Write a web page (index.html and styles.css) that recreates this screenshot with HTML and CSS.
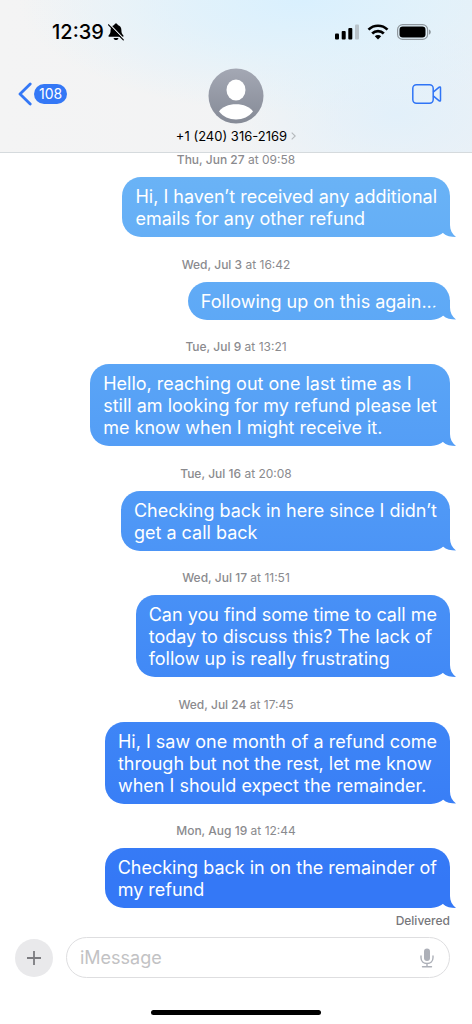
FILE: index.html
```html
<!DOCTYPE html>
<html lang="en">
<head>
<meta charset="utf-8">
<meta name="viewport" content="width=device-width, initial-scale=1">
<title>Messages</title>
<link rel="stylesheet" href="styles.css">
</head>
<body>
<div class="phone">
  <header class="header">
    <div class="status">
      <div class="status-time">
        <span>12:39</span>
        <svg width="16" height="18" viewBox="0 0 16 18" aria-hidden="true">
          <path d="M8 .6c.9 0 1.600.6 1.700 1.400 2.300.7 3.700 2.500 3.700 5 0 3 .6 4 1.800 5.200.6.6.4 1.600-.7 1.600H1.500c-1.100 0-1.300-1-.7-1.600C2 11 2.600 10 2.600 7c0-2.500 1.400-4.300 3.700-5C6.400 1.200 7.100.6 8 .6zM5.600 14.900h4.800c-.2 1.300-1.100 2.100-2.400 2.100s-2.200-.8-2.400-2.100z" fill="#000"/>
          <path d="M1.500 1.200 15.800 15.900" stroke="#eff3f6" stroke-width="1.200"/>
          <path d="M.6 1.800 15.300 16.900" stroke="#000" stroke-width="1.200" stroke-linecap="round"/>
        </svg>
      </div>
      <div class="status-icons">
        <svg width="24" height="16" viewBox="0 0 24 16" aria-hidden="true">
          <rect x="0" y="9.500" width="4" height="6" rx="1"/>
          <rect x="6.700" y="7" width="4" height="8.500" rx="1"/>
          <rect x="13.300" y="4" width="4" height="11.500" rx="1"/>
          <rect x="20" y=".5" width="4" height="15" rx="1" fill="#b9c3ca"/>
        </svg>
        <svg width="22" height="16" viewBox="0 0 22 16" aria-hidden="true">
          <g fill="none" stroke="#000" stroke-width="2.700">
            <path d="M1.500 5.600a13.600 13.600 0 0 1 19 0"/>
            <path d="M5.200 9.500a8.200 8.200 0 0 1 11.600 0"/>
          </g>
          <path d="M11 15.500 7.800 12.300a4.500 4.500 0 0 1 6.400 0z"/>
        </svg>
        <svg width="34" height="16" viewBox="0 0 34 16" aria-hidden="true">
          <rect x=".6" y=".6" width="30" height="14.800" rx="5" fill="none" stroke="#8f989e" stroke-width="1.200"/>
          <rect x="2.500" y="2.500" width="26" height="11" rx="3.200"/>
          <path d="M32 5.400c1.200.5 1.800 1.400 1.800 2.600s-.6 2.100-1.800 2.600z" fill="#8f989e"/>
        </svg>
      </div>
    </div>
    <nav class="nav">
      <button class="back" type="button" aria-label="Back, 108 unread">
        <svg width="14" height="24" viewBox="0 0 14 24" aria-hidden="true"><path d="M12.200 2 2 12l10.200 10" fill="none" stroke="#3478f6" stroke-width="2.800" stroke-linecap="round" stroke-linejoin="round"/></svg>
        <span class="count">108</span>
      </button>
      <button class="contact" type="button">
        <svg width="56" height="56" viewBox="0 0 56 56" aria-hidden="true">
          <defs>
            <linearGradient id="avatar" x1="0" y1="0" x2="0" y2="1"><stop offset="0" stop-color="#a4a8b4"/><stop offset="1" stop-color="#858a96"/></linearGradient>
          </defs>
          <circle cx="28" cy="28" r="27.500" fill="url(#avatar)"/>
          <ellipse cx="28" cy="22" rx="9.500" ry="10.500" fill="#fff"/>
          <path d="M11 43.500C14 39 20.500 36.300 28 36.300S42 39 45 43.500C40.800 48.700 35 51.500 28 51.500s-12.800-2.800-17-8z" fill="#fff"/>
        </svg>
        <span class="number">+1 (240) 316-2169
          <svg width="5" height="8" viewBox="0 0 5 8" aria-hidden="true"><path d="M.7.6 4.200 4 .7 7.400" fill="none" stroke="#b4b8bb" stroke-width="1.100"/></svg>
        </span>
      </button>
      <button class="video" type="button" aria-label="Video call">
        <svg width="30" height="20" viewBox="0 0 30 20" fill="none" stroke="#2f74f6" stroke-width="1.500" stroke-linejoin="round" aria-hidden="true">
          <rect x=".8" y=".8" width="20.400" height="18.400" rx="3.600"/>
          <path d="M21.200 8.200 27.200 3.200c.7-.5 1.300-.3 1.300.6v12.400c0 .9-.6 1.100-1.300.6l-6-5"/>
        </svg>
      </button>
    </nav>
  </header>

  <main class="chat">
    <ol class="thread">
      <li class="entry"><time class="stamp"><b>Thu, Jun 27</b> at 09:58</time><p class="bubble">Hi, I haven’t received any additional<br>emails for any other refund</p></li>
      <li class="entry"><time class="stamp"><b>Wed, Jul 3</b> at 16:42</time><p class="bubble">Following up on this again...</p></li>
      <li class="entry"><time class="stamp"><b>Tue, Jul 9</b> at 13:21</time><p class="bubble">Hello, reaching out one last time as I<br>still am looking for my refund please let<br>me know when I might receive it.</p></li>
      <li class="entry"><time class="stamp"><b>Tue, Jul 16</b> at 20:08</time><p class="bubble">Checking back in here since I didn’t<br>get a call back</p></li>
      <li class="entry"><time class="stamp"><b>Wed, Jul 17</b> at 11:51</time><p class="bubble">Can you find some time to call me<br>today to discuss this? The lack of<br>follow up is really frustrating</p></li>
      <li class="entry"><time class="stamp"><b>Wed, Jul 24</b> at 17:45</time><p class="bubble">Hi, I saw one month of a refund come<br>through but not the rest, let me know<br>when I should expect the remainder.</p></li>
      <li class="entry"><time class="stamp"><b>Mon, Aug 19</b> at 12:44</time><p class="bubble">Checking back in on the remainder of<br>my refund</p></li>
    </ol>
    <p class="receipt">Delivered</p>
  </main>

  <footer class="footer">
    <form class="composer">
      <button class="add" type="button" aria-label="Add attachment">
        <svg width="14" height="14" viewBox="0 0 14 14" aria-hidden="true"><path d="M7 0v14M0 7h14" stroke="#7c7c80" stroke-width="1.800"/></svg>
      </button>
      <div class="field">
        <input class="input" type="text" placeholder="iMessage" aria-label="iMessage">
        <button class="mic" type="button" aria-label="Dictate">
          <svg width="14" height="20" viewBox="0 0 14 20" aria-hidden="true">
            <rect x="4" y=".5" width="6" height="12.500" rx="3" fill="#adb0b8"/>
            <path d="M1 8v1.800C1 13.200 3.500 15.500 7 15.500s6-2.300 6-5.700V8M7 15.500v3M2.500 18.700h9" fill="none" stroke="#adb0b8" stroke-width="1.400" stroke-linecap="round"/>
          </svg>
        </button>
      </div>
    </form>
    <div class="home-bar"></div>
  </footer>
</div>
</body>
</html>
```
FILE: styles.css
```css
* { box-sizing: border-box; }

body {
  margin: 0;
  background: #fff;
  color: #000;
  font-family: Inter, "Liberation Sans", sans-serif;
}

svg { display: block; flex: none; }

button {
  margin: 0;
  padding: 0;
  border: 0;
  background: none;
  color: inherit;
  font: inherit;
  cursor: pointer;
}

.phone {
  display: flex;
  flex-direction: column;
  min-height: 100vh;
}

.header {
  padding: 20px 18px 8px;
  border-bottom: 1px solid #d5dadd;
  background:
    radial-gradient(ellipse 60% 75% at 64% 0%, #d9f0fe 0%, #dcf1fdc0 40%, #dcf1fd00 100%),
    radial-gradient(ellipse 36% 60% at 84% 75%, #e2f0fa 0%, #e2f0fa00 100%),
    linear-gradient(90deg, #f4f4f4 0%, #f2f3f4 60%, #edf1f5 100%);
}

.status {
  display: flex;
  align-items: center;
  justify-content: space-between;
  height: 24px;
  padding: 0 23px 0 34px;
}

.status-time {
  display: flex;
  align-items: center;
  gap: 4px;
  font-size: 20px;
  font-weight: 500;
  line-height: 24px;
}

.status-icons {
  display: flex;
  align-items: center;
  gap: 8px;
}

.nav {
  display: grid;
  grid-template-columns: 1fr auto 1fr;
  align-items: start;
  padding-top: 24px;
}

.back {
  display: flex;
  align-items: center;
  gap: 2px;
  justify-self: start;
  height: 52px;
}

.count {
  padding: 0 5px;
  border-radius: 10px;
  background: #3478f6;
  color: #fff;
  font-size: 14px;
  line-height: 20px;
}

.contact {
  display: flex;
  flex-direction: column;
  align-items: center;
  gap: 4px;
}

.number {
  display: flex;
  align-items: center;
  gap: 4px;
  font-size: 13px;
  line-height: 16px;
}

.video {
  display: flex;
  align-items: center;
  justify-self: end;
  height: 52px;
  margin-right: 12px;
}

.chat {
  display: flex;
  flex: 1;
  flex-direction: column;
}

.thread {
  display: flex;
  flex: 1;
  flex-direction: column;
  justify-content: space-between;
  margin: 0;
  padding: 0 22px;
  list-style: none;
}

.entry {
  display: flex;
  flex-direction: column;
  align-items: flex-end;
}

.stamp {
  align-self: center;
  margin-bottom: 10px;
  color: #8a8a8e;
  font-size: 12px;
  line-height: 14px;
}

.stamp b { font-weight: 500; }

/* One gradient spans the window, so lower bubbles are a deeper blue. */
.bubble,
.bubble::after {
  background: linear-gradient(#72b8f6 0%, #6ab3f6 17%, #5ca7f6 33%, #4f98f6 50%, #4189f6 66%, #3478f6 86%) fixed;
}

.bubble {
  position: relative;
  max-width: 100%;
  margin: 0;
  padding: 9px 13px 7px;
  border-radius: 19px;
  color: #fff;
  font-size: 18px;
  line-height: 22px;
}

/* The tail: a notch cut into the corner, then a point past the edge.
   Its clip-path is what gives it shape, so it needs no radius. */
.bubble::after {
  position: absolute;
  right: -6px;
  bottom: 0;
  width: 26px;
  height: 20px;
  clip-path: path("M20 0V8C20 13 22 17 26 20C21 20 16 19 13 16L4 8Z");
  content: "";
}

.receipt {
  margin: 0;
  padding: 5px 22px 9px;
  color: #77777b;
  font-size: 12px;
  font-weight: 500;
  line-height: 15px;
  text-align: right;
}

.footer { padding-bottom: 9px; }

.composer {
  display: flex;
  align-items: center;
  gap: 13px;
  margin: 0;
  padding: 0 22px 0 15px;
}

.add {
  display: grid;
  flex: none;
  place-items: center;
  width: 38px;
  height: 38px;
  border-radius: 50%;
  background: #e9e9eb;
}

.field {
  display: flex;
  flex: 1;
  align-items: center;
  height: 41px;
  padding: 0 15px 0 13px;
  border: 1px solid #dedee0;
  border-radius: 21px;
}

.input {
  flex: 1;
  min-width: 0;
  padding: 0;
  border: 0;
  outline: 0;
  background: none;
  font: inherit;
  font-size: 18px;
  line-height: 22px;
}

.input::placeholder { color: #c2c2c4; opacity: 1; }

.home-bar {
  width: 36%;
  height: 5px;
  margin: 32px auto 0;
  border-radius: 3px;
  background: #000;
}
```
